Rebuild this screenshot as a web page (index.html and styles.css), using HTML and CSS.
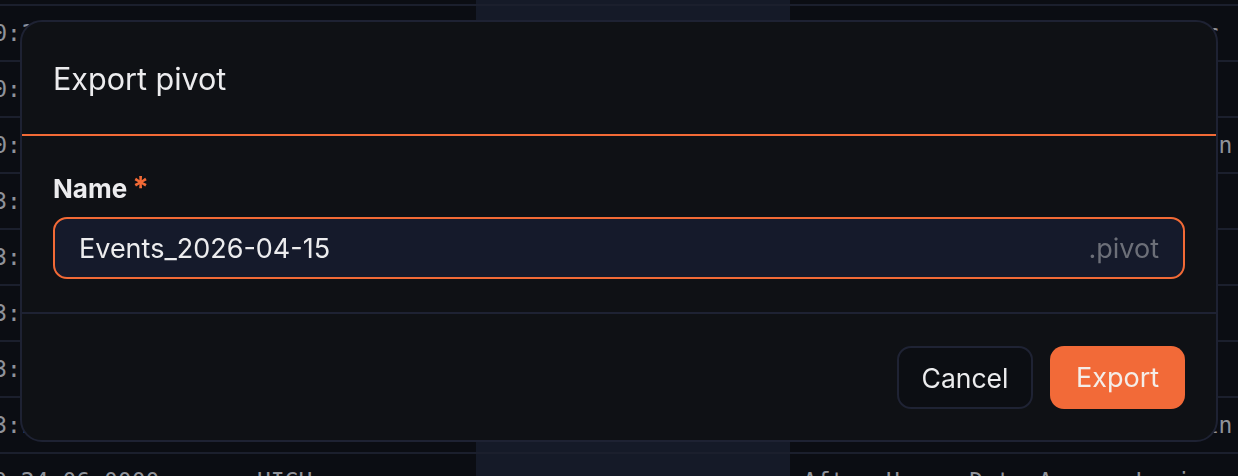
FILE: index.html
```html
<!DOCTYPE html>
<html lang="en">
<head>
<meta charset="utf-8">
<title>Export pivot</title>
<link rel="stylesheet" href="styles.css">
</head>
<body>
<div class="page">
  <div class="table">
    <div class="row head">
      <div class="cell c1"></div><div class="cell c2"></div><div class="cell c3"></div><div class="cell c4"></div>
    </div>
    <div class="row"><div class="cell c1">2026-04-15 10:18:42:0000</div><div class="cell c2">MEDIUM</div><div class="cell c3"></div><div class="cell c4">New Device Registered for User</div></div>
    <div class="row"><div class="cell c1">2026-04-15 10:07:19:0000</div><div class="cell c2">LOW</div><div class="cell c3"></div><div class="cell c4">Password Reset Requested</div></div>
    <div class="row"><div class="cell c1">2026-04-15 10:01:55:0000</div><div class="cell c2">HIGH</div><div class="cell c3"></div><div class="cell c4">Multiple Failed Attempts: Login</div></div>
    <div class="row"><div class="cell c1">2026-04-15 03:52:10:0000</div><div class="cell c2">LOW</div><div class="cell c3"></div><div class="cell c4">Session Token Refreshed</div></div>
    <div class="row"><div class="cell c1">2026-04-15 03:44:37:0000</div><div class="cell c2">MEDIUM</div><div class="cell c3"></div><div class="cell c4">Config Change Detected</div></div>
    <div class="row"><div class="cell c1">2026-04-15 03:31:08:0000</div><div class="cell c2">LOW</div><div class="cell c3"></div><div class="cell c4">API Key Rotated</div></div>
    <div class="row"><div class="cell c1">2026-04-15 03:20:51:0000</div><div class="cell c2">MEDIUM</div><div class="cell c3"></div><div class="cell c4">Firewall Rule Updated</div></div>
    <div class="row"><div class="cell c1">2026-04-15 03:15:26:0000</div><div class="cell c2">HIGH</div><div class="cell c3"></div><div class="cell c4">Privilege Escalation via Domain</div></div>
    <div class="row"><div class="cell c1">2026-04-15 10:24:06:0000</div><div class="cell c2">HIGH</div><div class="cell c3"></div><div class="cell c4">After Hours Data Access Login</div></div>
  </div>
</div>

<div class="overlay">
  <div class="modal" role="dialog" aria-labelledby="dlg-title">
    <div class="modal-header">
      <h2 id="dlg-title" class="modal-title">Export pivot</h2>
    </div>
    <div class="modal-body">
      <label class="field-label" for="pivot-name">Name<span class="req">*</span></label>
      <div class="input-wrap">
        <input id="pivot-name" class="text-input" type="text" value="Events_2026-04-15">
        <span class="suffix">.pivot</span>
      </div>
    </div>
    <div class="modal-footer">
      <button class="btn btn-secondary" type="button">Cancel</button>
      <button class="btn btn-primary" type="button">Export</button>
    </div>
  </div>
</div>
</body>
</html>
```

FILE: styles.css
```css
html, body {
  margin: 0;
  padding: 0;
  height: 100%;
}

body {
  background: #0b0d13;
  font-family: Inter, "Noto Sans", sans-serif;
  overflow: hidden;
}

.page {
  overflow: hidden;
  height: 100%;
}

.table {
  margin-left: -189px;
  display: flex;
  flex-direction: column;
}

.row {
  display: grid;
  grid-template-columns: 430px 235px 314px 600px;
  height: 56px;
  box-sizing: border-box;
  border-bottom: 2px solid #1b1f2d;
  font-family: "DejaVu Sans Mono", "Liberation Mono", monospace;
  font-size: 23px;
  color: #8f929a;
}

.row.head {
  height: 6px;
}

.cell {
  display: flex;
  align-items: center;
  padding-left: 16px;
  white-space: nowrap;
  overflow: hidden;
}

.cell.c3 {
  background: #151a28;
}

.cell.c4 {
  padding-left: 13px;
  overflow: visible;
}

/* Dialog */
.overlay {
  position: fixed;
  inset: 0;
  padding: 20px;
  display: flex;
  align-items: flex-start;
}

.modal {
  width: 1198px;
  box-sizing: border-box;
  background: #0f1115;
  border: 2px solid #1e2233;
  border-radius: 22px;
  color: #ececee;
  overflow: hidden;
}

.modal-header {
  height: 112px;
  display: flex;
  align-items: center;
  padding: 0 31px;
  border-bottom: 2px solid #f26a36;
}

.modal-title {
  margin: 0;
  font-size: 30.5px;
  font-weight: 400;
  letter-spacing: 0;
}

.modal-body {
  padding: 37px 31px 33px;
  border-bottom: 2px solid #1e2233;
  display: flex;
  flex-direction: column;
  gap: 12px;
}

.field-label {
  font-size: 26px;
  font-weight: 700;
  line-height: 32px;
  color: #ececee;
}

.req {
  color: #f26a36;
  margin-left: 5px;
  font-size: 30px;
  line-height: 0;
}

.input-wrap {
  display: flex;
  align-items: center;
  height: 62px;
  box-sizing: border-box;
  border: 2px solid #f26a36;
  border-radius: 14px;
  background: #151a2b;
  padding: 0 24px;
}

.text-input {
  flex: 1;
  min-width: 0;
  border: none;
  outline: none;
  background: transparent;
  color: #ececee;
  font-family: Inter, "Noto Sans", sans-serif;
  font-size: 27px;
  padding: 0;
}

.suffix {
  font-size: 27px;
  color: #6c6f78;
}

.modal-footer {
  display: flex;
  justify-content: flex-end;
  gap: 17px;
  padding: 32px 31px 31px;
}

.btn {
  height: 63px;
  box-sizing: border-box;
  border-radius: 14px;
  font-family: Inter, "Noto Sans", sans-serif;
  font-size: 27px;
  padding: 0 20px;
  cursor: pointer;
}

.btn-secondary {
  background: #0c0e13;
  border: 2px solid #1f2334;
  color: #ececee;
  width: 136px;
  font-size: 26.5px;
}

.btn-primary {
  background: #f26a38;
  border: none;
  color: #f4ede8;
  width: 135px;
}
```
